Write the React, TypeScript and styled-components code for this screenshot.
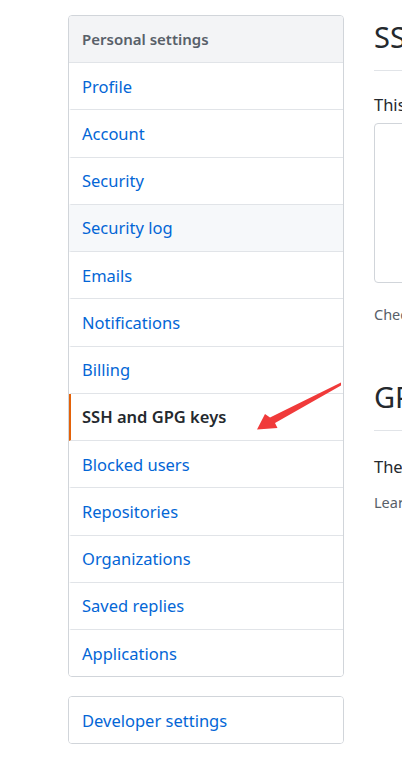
import React from "react";
import styled, { createGlobalStyle } from "styled-components";

const GlobalStyle = createGlobalStyle`
  html, body { margin: 0; padding: 0; background: #fff; overflow: hidden; }
  body { font-family: "Noto Sans", "Open Sans", "Liberation Sans", sans-serif; color: #24292e; }
  * { box-sizing: border-box; }
`;

const Page = styled.div`
  position: relative;
  display: flex;
  align-items: flex-start;
  gap: 30px;
  padding: 15px 0 0 68px;
  width: 1200px;
  height: 770px;
`;

const Sidebar = styled.nav`
  width: 276px;
  flex-shrink: 0;
  display: flex;
  flex-direction: column;
  gap: 19px;
`;

const Menu = styled.div`
  border: 1px solid #d1d5da;
  border-radius: 4px;
  overflow: hidden;
  display: flex;
  flex-direction: column;
`;

const MenuHeading = styled.div`
  height: 47px;
  flex-shrink: 0;
  display: flex;
  align-items: center;
  padding: 0 13px;
  background: #f3f4f6;
  border-bottom: 1px solid #e1e4e8;
  color: #586069;
  font-size: 15px;
  font-weight: 600;
`;

const MenuItem = styled.a<{ $selected?: boolean; $shaded?: boolean; $last?: boolean }>`
  height: ${(p) => (p.$last ? "46px" : "47.25px")};
  flex-shrink: 0;
  display: flex;
  align-items: center;
  padding: 0 13px 0 11px;
  font-size: 16.5px;
  text-decoration: none;
  color: ${(p) => (p.$selected ? "#24292e" : "#0366d6")};
  font-weight: ${(p) => (p.$selected ? 600 : 400)};
  background: ${(p) => (p.$shaded ? "#f6f8fa" : "#fff")};
  border-bottom: ${(p) => (p.$last ? "none" : "1px solid #e1e4e8")};
  border-left: 2px solid ${(p) => (p.$selected ? "#e36209" : "transparent")};
`;

const Main = styled.main`
  width: 760px;
  flex-shrink: 0;
  display: flex;
  flex-direction: column;
`;

const SectionTitle = styled.h2<{ $first?: boolean }>`
  margin: ${(p) => (p.$first ? "4px" : "0")} 0 0;
  padding-bottom: 15px;
  border-bottom: 1px solid #e1e4e8;
  font-size: 29px;
  font-weight: 400;
  line-height: 36px;
  white-space: nowrap;
`;

const Lead = styled.p<{ $gap: number }>`
  margin: ${(p) => p.$gap}px 0 0;
  font-size: 16.5px;
  line-height: 24px;
  white-space: nowrap;
`;

const Blankslate = styled.div`
  margin-top: 6px;
  height: 160px;
  border: 1px solid #d1d5da;
  border-radius: 4px;
  display: flex;
  align-items: center;
  justify-content: center;
  color: #586069;
  font-size: 16.5px;
`;

const Note = styled.p<{ $gap: number }>`
  margin: ${(p) => p.$gap}px 0 0;
  font-size: 14.5px;
  line-height: 22px;
  color: #586069;
  white-space: nowrap;
`;

const Spacer = styled.div`
  height: 54px;
`;

const Annotation = styled.svg`
  position: absolute;
  left: 0;
  top: 0;
  pointer-events: none;
`;

const items = [
  "Profile",
  "Account",
  "Security",
  "Security log",
  "Emails",
  "Notifications",
  "Billing",
  "SSH and GPG keys",
  "Blocked users",
  "Repositories",
  "Organizations",
  "Saved replies",
  "Applications",
];

export default function App() {
  return (
    <>
      <GlobalStyle />
      <Page>
        <Sidebar>
          <Menu>
            <MenuHeading>Personal settings</MenuHeading>
            {items.map((it, i) => (
              <MenuItem
                key={it}
                href="#"
                $selected={it === "SSH and GPG keys"}
                $shaded={it === "Security log"}
                $last={i === items.length - 1}
              >
                {it}
              </MenuItem>
            ))}
          </Menu>
          <Menu>
            <MenuItem href="#" $last>
              Developer settings
            </MenuItem>
          </Menu>
        </Sidebar>
        <Main>
          <SectionTitle $first>SSH keys</SectionTitle>
          <Lead $gap={22}>This is a list of SSH keys associated with your account. Remove any keys that you do not recognize.</Lead>
          <Blankslate>There are no SSH keys associated with your account.</Blankslate>
          <Note $gap={20}>Check out our guide to generating SSH keys or troubleshoot common SSH problems.</Note>
          <Spacer />
          <SectionTitle>GPG keys</SectionTitle>
          <Lead $gap={24}>There are no GPG keys associated with your account.</Lead>
          <Note $gap={12}>Learn how to generate a GPG key and add it to your account.</Note>
        </Main>
        <Annotation width="402" height="770" viewBox="0 0 402 770">
          <polygon
            points="257,429.5 265,414 270,417.5 341,382.5 341,385.5 275,423 277.5,428"
            fill="#f03a3a"
          />
        </Annotation>
      </Page>
    </>
  );
}
